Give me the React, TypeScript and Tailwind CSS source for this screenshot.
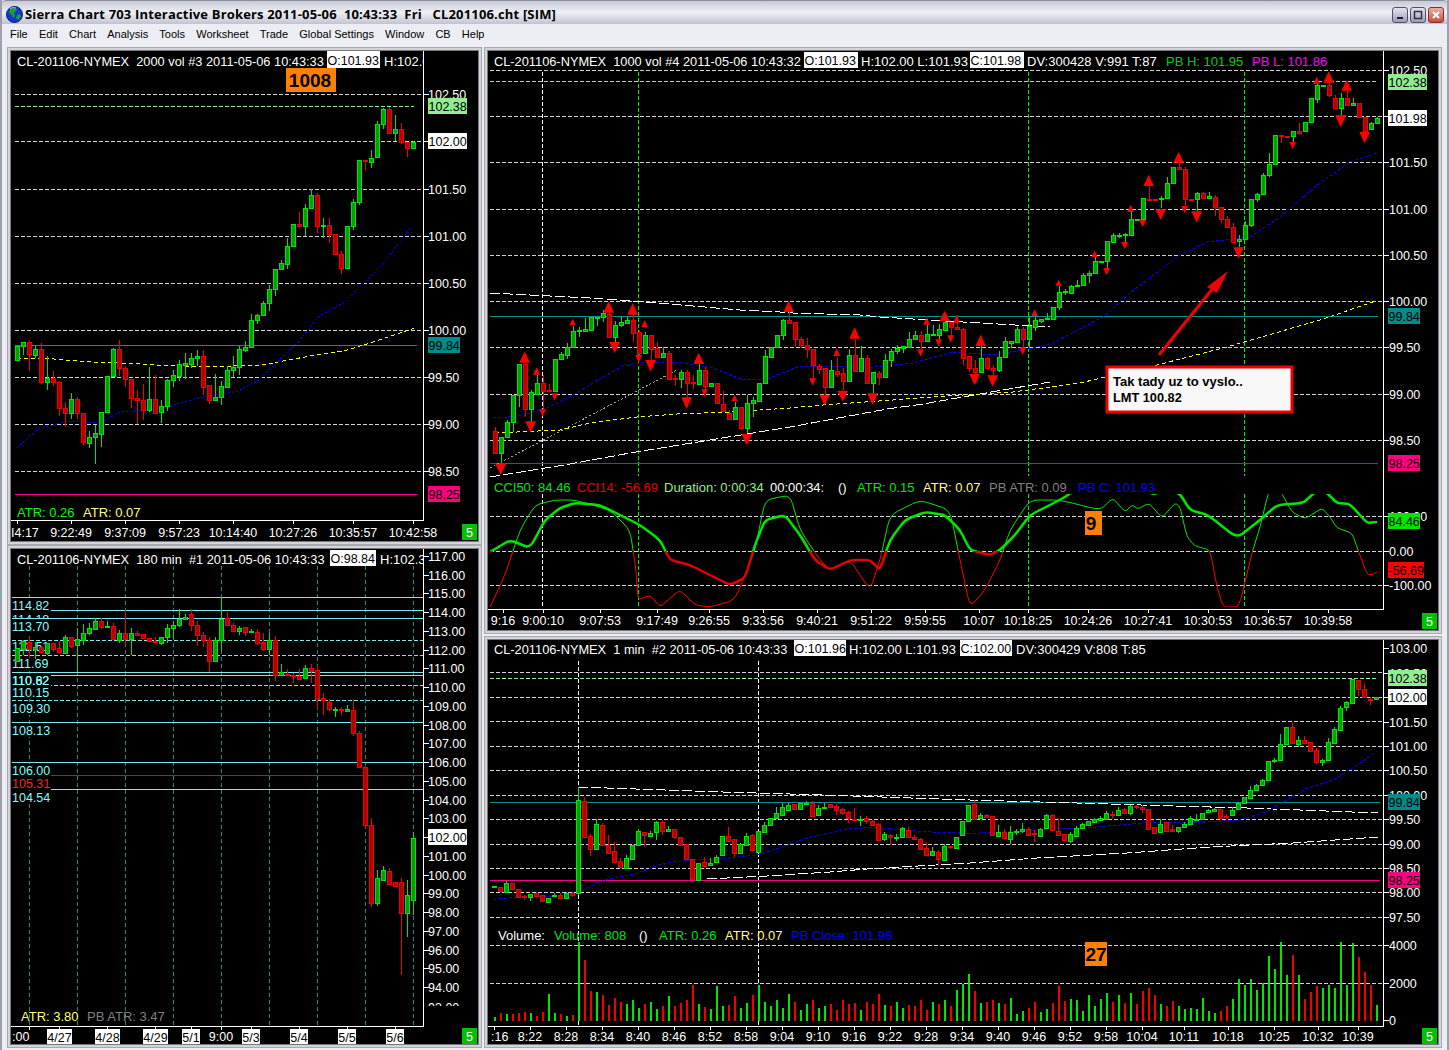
import React from "react";

type Row = number[];
type C = { x: number; g: number; t: number; b: number; h: number; l: number };

const seg = (ox: number, oy: number, start: number, rows: Row[]): C[] =>
  rows.map((r, i) => ({
    x: Math.round(ox + (start + 18 * i) / 3),
    g: r[0],
    t: Math.round(oy + r[1] / 3),
    b: Math.round(oy + r[2] / 3),
    h: Math.round(oy + (r[3] ?? r[1]) / 3),
    l: Math.round(oy + (r[4] ?? r[2]) / 3),
  }));

const pts = (ox: number, oy: number, a: number[]) => {
  const out: string[] = [];
  for (let i = 0; i < a.length; i += 2) out.push(`${ox + a[i] / 3},${oy + a[i + 1] / 3}`);
  return out.join(" ");
};

const smooth = (s: string) => {
  const p = s.split(" ").map((q) => q.split(",").map(Number));
  let d = `M${p[0][0]},${p[0][1]}`;
  for (let i = 1; i < p.length - 1; i++) {
    const ax = p[i][0] - (p[i][0] - p[i - 1][0]) * 0.25;
    const ay = p[i][1] - (p[i][1] - p[i - 1][1]) * 0.25;
    const bx = p[i][0] + (p[i + 1][0] - p[i][0]) * 0.25;
    const by = p[i][1] + (p[i + 1][1] - p[i][1]) * 0.25;
    d += ` L${ax},${ay} Q${p[i][0]},${p[i][1]} ${bx},${by}`;
  }
  const e = p[p.length - 1];
  return `${d} L${e[0]},${e[1]}`;
};

const c1 = seg(12, 95, 16, [
  [1,754,794],[1,742,754,742,780],[0,742,778,738,828],[1,763,779,752,790],[0,763,862,744,868],[1,850,862,784,885],[0,850,862,828,873],[0,862,940,858,962],[0,940,953,922,996],[1,913,953,895,972],[0,913,955,906,972],[0,955,1040,955,1050],[1,1027,1045,1008,1058],[1,1015,1027,990,1106],[1,952,1016,952,1055],[1,844,952],[1,763,844,760,846],[0,763,820,736,844],[0,820,853,812,875],[0,853,910,853,940],[0,910,914,885,986],[0,916,946,868,975],[1,913,946,816,950],[0,913,953,840,958],[1,934,952,916,984],[1,856,934,852,948],[1,840,856,825,876],[1,808,842,796,858],[1,805,809,774,852],[1,790,806,774,820],[1,784,790,766,812],[0,784,875,766,900],[0,871,916,871,927],[1,907,916,838,918],[1,874,907,858,930],[1,826,875,813,875],[1,816,826,784,846],[1,763,815,752,840],[1,757,764,738,770],[1,676,757,657,758],[1,661,676,657,688],[1,625,661,618,662],[1,583,625,570,648],[1,523,583,523,602],[1,505,523,495,524],[1,454,506,430,522],[1,388,454,388,455],[0,388,394,352,394],[1,340,394,327,423],[1,301,340,282,340],[0,301,394,295,414],[1,390,394,370,428],[0,391,418,370,444],[0,418,478],[0,478,518,468,538],[1,394,518],[1,322,394,312,404],[1,196,322,196,330],[0,196,199,196,225],[1,190,200,166,218],[1,88,187,78,187],[1,43,88,40,102],[0,43,115,36,115],[1,103,115,60,138],[0,103,142,84,146],[0,142,160,142,186],[1,140,160,138,160],
]);

const c2a = seg(0, 590, 52, [
  [1,175,212,175,214],[1,154,176,150,195],[0,155,178,140,205],[1,172,178,155,208],[0,172,185,168,186],[1,160,188,158,195],[0,160,176,160,185],[0,175,185,152,185],[1,140,188,136,188],[0,140,167,140,174],[1,148,166,115,246],[1,130,150,102,165],[1,115,130,98,135],[1,92,116,85,120],[0,92,112,85,116],[1,107,110,92,113],[0,108,148,100,150],[1,130,150,120,158],[0,130,146,60,165],[1,130,146,114,195],[0,130,136,124,138],[0,133,143,133,145],[0,143,154],[0,152,155,142,158],[1,140,158,140,164],[1,115,142,102,158],[1,106,115,92,148],[1,86,106,58,110],[1,82,88,72,88],[0,73,106,58,122],[0,106,136,94,168],[0,136,151,125,172],[0,150,212,140,245],[1,150,212,140,212],[1,86,150,22,182],[0,85,106,66,108],[0,106,124,100,124],[1,115,124,108,134],[0,112,127,112,138],[1,124,127,118,128],[0,125,158,118,165],[0,157,178,130,182],[1,151,178,130,195],[0,150,255,138,272],[1,247,255,222,255],[0,252,256,236,258],[0,256,259,248,278],[0,258,266,238,268],[1,235,265,226,265],[0,235,242,222,280],[0,241,326,226,358],[0,325,330,310,374],[0,335,358,328,362],[1,358,360,350,380],[0,358,360,352,376],[1,358,362,345,366],[0,361,430,326,438],[0,430,530,424,532],[0,530,706,526,718],
]);
const c2b: C[] = [
  {x:371,g:0,t:825,b:903,h:818,l:907},{x:377,g:1,t:878,b:903,h:870,l:906},{x:383,g:1,t:870,b:880,h:866,l:880},{x:389,g:0,t:871,b:884,h:868,l:884},{x:395,g:0,t:882,b:886,h:882,l:886},{x:401,g:0,t:882,b:913,h:878,l:975},{x:407,g:1,t:895,b:913,h:880,l:937},{x:413,g:1,t:838,b:900,h:832,l:915},
];

const c3 = [
  ...seg(490, 290, 14, [
    [0,424,490,412,490],[1,440,490,440,520],[1,397,440,390,440],[1,316,397,316,425],[1,222,316,222,350],[0,222,358,222,380],[1,307,358,300,395],[1,280,312,255,312],[0,280,302,256,365],[0,300,302,282,302],[1,208,302,208,305],[1,192,208,186,208],[1,172,194,160,207],[1,124,172,108,172],[1,120,123,112,140],[1,118,122,84,122],[1,82,119],[1,82,84,82,108],[1,70,80,60,95],[0,72,140,60,140],[1,106,140,94,160],[1,96,106,82,112],[1,90,98,82,100],[0,90,128,75,155],[0,126,188,120,195],[1,136,188,125,190],[0,136,176,135,210],[0,174,200,155,200],[1,190,200,172,202],[0,190,266,184,266],[0,264,266,255,288],[1,247,266,240,294],[0,247,278,240,325],[0,276,280,255,297],[1,240,281,220,281],[0,240,288,230,300],[1,280,288,280,290],[0,280,340],[0,343,362,304,362],[0,370,386,360,386],[1,352,386,335,386],[0,352,414,352,420],[1,340,414,315,430],[1,331,340,320,380],[1,278,332],[1,198,278,180,278],[1,172,200],[1,136,172],[1,90,136,88,150],[0,90,98,60,102],
  ]),
  ...seg(780, 280, 44, [
    [0,127,178,127,200],[0,178,196,170,205],[0,196,208,175,234],[0,208,256,208,295],[0,258,266,252,282],[0,265,322,265,345],[1,270,322,240,322],[0,274,281,230,290],[0,280,302,265,330],[1,226,302,208,302],[0,226,272,178,275],[1,235,272,198,275],[0,235,308,226,310],[1,277,308,277,340],[0,278,290,272,315],[1,241,290,222,292],[1,212,240,208,262],[1,204,212,196,222],[1,198,205,198,218],[1,178,200,155,205],[1,165,178,153,180],[0,165,182,153,208],[1,163,182,136,182],[1,163,164,136,164],[1,148,164,132,178],[1,127,149,118,150],[0,127,142,125,168],[0,142,146,105,146],[0,148,233,145,255],[0,229,263,229,276],[0,263,275,240,285],[1,235,275,198,275],[0,235,263,232,265],[0,263,269,256,290],[1,232,269,212,275],[1,184,232,172,234],[1,184,190,184,205],[1,148,185,140,185],[0,148,176,140,205],[1,138,176,108,205],[1,120,140,112,152],[1,117,122,117,130],[1,114,118,98,118],[1,80,116],[1,36,80,18,90],[1,32,36,28,46],[1,18,38,15,38],[1,15,18,0,18],
  ]),
  ...seg(1080, 90, 8, [
    [1,556,586,550,586],[1,550,555,544,580],[1,514,550,502,550],[1,512,515],[1,454,514,454,534],[1,436,455,430,455],[1,434,436,430,445],[1,432,434,430,462],[1,388,436,366,436],[1,387,389],[1,325,388,325,390],[0,326,328,288,328],[0,327,329],[1,324,327,318,355],[1,278,325,262,325],[1,232,278],[0,232,238,218,238],[0,238,328,232,350],[0,327,329],[1,310,328,306,362],[0,310,325,305,325],[1,319,325,305,325],[0,320,352,314,378],[0,352,388,352,398],[0,388,412,378,412],[0,412,456,400,460],[1,448,454,435,470],[1,406,448,394,448],[1,328,406,328,412],[1,313,328,310,336],[1,256,313,250,313],[1,223,256,190,262],[1,136,223,136,225],[0,136,139,136,160],[0,137,139],[1,124,139,124,155],[0,124,130,100,136],[1,97,124,95,124],[1,25,97],
  ]),
  ...seg(1250, 0, 200, [
    [1,256,296,252,310],[1,255,257],[0,256,286,240,292],[0,295,325,285,325],[1,295,325,280,345],[0,295,314,272,318],[1,310,314,295,314],[0,310,352,310,355],[0,352,392,350,395],[1,370,388,365,388],[1,355,370,350,370],
  ]),
];

const c4 = [
  ...seg(490, 780, 12, [
    [1,318,320],[0,321,332],[1,310,335,304,335],[0,310,326],[0,328,352],[0,347,350,345,360],[1,342,350,342,362],[0,339,347,335,349],[0,346,362],[1,354,365],[1,345,349,338,349],[0,346,355,340,358],[1,340,354,336,354],[0,339,346,336,350],[1,60,340,20,345],[0,64,172,52,172],[0,168,208,162,228],[1,133,206,118,206],[0,136,196,130,196],[0,196,218,166,218],[0,214,245,186,245],[0,244,261,235,261],[1,235,265,226,265],[1,196,236],[1,154,196,148,196],[0,157,164,155,200],[1,160,168,153,171],[1,127,157,124,180],[0,127,154,120,165],[1,148,153,138,157],[0,148,170,148,178],[0,172,194,170,194],[0,193,236],[0,238,296,236,296],[1,248,299],[0,246,257,232,257],[1,250,254,235,254],[1,230,247,226,250],[1,168,226],[0,168,182,140,182],[0,178,220,178,232],[1,193,220,190,222],[1,168,194,160,194],[0,166,210,162,210],[1,154,216],[1,136,155,126,155],[1,115,134],[1,100,113,82,113],[1,82,104,70,104],[1,76,89,70,89],[0,72,86],[1,70,86],[1,68,70,62,70],[0,68,107,64,107],[1,85,104,76,104],[1,82,85,68,85],[0,73,80],[0,79,89,72,105],[0,88,98,84,105],[0,97,113,92,128],[0,118,120,84,120],[1,116,118,108,138],[0,115,124,108,132],[0,124,134,120,136],[0,133,179,130,179],[1,162,178,156,184],[0,165,172,162,195],[1,170,172,162,182],[1,143,170,140,170],[0,150,172,142,172],[0,172,178,165,180],[0,178,206,175,206],[0,205,226,186,226],[1,214,224,202,228],[0,216,238,210,258],[1,199,241,193,241],[0,198,201,198,208],[1,172,203],[1,124,166],[1,76,124],
  ]),
  ...seg(960, 670, 43, [
    [0,402,447,390,447],[1,435,443,430,447],[0,435,441,432,445],[0,439,496],[1,486,497,465,497],[0,487,503,478,508],[1,486,506,468,522],[1,484,487,478,495],[1,478,484,460,488],[0,478,494,472,494],[0,488,491,480,515],[1,478,497,475,497],[1,436,473,432,473],[0,436,480,433,480],[0,482,494,445,494],[0,493,509],[1,492,513,485,518],[1,475,497,468,497],[1,462,474,458,474],[1,453,464],[1,447,455,444,458],[1,445,450,438,452],[1,430,446,422,446],[0,432,435,422,448],[1,421,434,412,434],[0,418,428,415,428],[1,409,428,406,434],[0,408,412,405,416],[0,412,418,405,428],[0,418,476],[0,472,488],[1,461,485,446,485],[0,457,482,455,482],[0,478,484,465,484],[1,472,482,470,490],[1,462,472,455,472],[1,445,461,438,461],[1,446,448,432,448],[1,428,447],[1,421,426,416,430],[1,418,422,414,425],[0,418,443],[0,439,441,432,447],[1,421,434,412,434],[1,399,418,395,418],[1,382,398],[1,359,385,348,385],[1,346,361,343,361],[1,331,346,326,346],[1,274,329],[1,270,274,264,280],[1,223,271,192,271],[1,172,221],[0,172,219,155,219],[1,211,221,198,230],[0,211,220,198,220],[0,217,242],[0,241,275,235,282],[1,271,277,266,288],[1,217,271,205,271],[1,178,218,172,218],[1,113,179,108,179],[1,96,110,92,122],[1,28,100],[0,30,58,30,78],[0,58,82,40,82],[0,88,90,80,105],[1,82,88],
  ]),
];

const arrows: number[][] = [
  ...[[104,184,218,16],[140,232,254,11],[248,86,106,10],[356,34,68,16],[428,40,74,16],[464,90,112,10],[626,188,222,16],[734,314,334,10],[896,32,66,16]].map((a) => [490,290,1,...a]),
  ...[[32,522,554,16],[122,394,428,16],[158,358,380,10],[194,310,332,10],[374,156,190,16],[446,195,218,10],[482,210,245,16],[590,322,356,16],[644,298,320,10],[770,432,466,16]].map((a) => [490,290,0,...a]),
  ...[[170,205,228,10],[224,142,176,16],[440,112,134,10],[494,92,124,16],[530,106,128,10],[602,164,198,16],[764,88,108,10],[836,0,17,10]].map((a) => [780,280,1,...a]),
  ...[[98,295,317,10],[134,344,376,16],[188,332,365,16],[278,340,374,16],[422,208,230,10],[476,178,200,10],[512,166,188,10],[584,282,316,16],[638,286,320,16],[728,202,225,10]].map((a) => [780,280,0,...a]),
  ...[[44,482,502,10],[152,344,366,10],[206,254,288,16],[296,186,218,16]].map((a) => [1080,90,1,...a]),
  ...[[80,534,556,10],[134,456,478,10],[188,390,412,10],[242,358,390,16],[314,348,370,10],[350,364,398,16],[638,156,178,10],[476,472,506,16],[782,76,110,16],[854,126,160,16]].map((a) => [1080,90,0,...a]),
  ...[[200,230,252,10],[236,214,248,16],[290,240,272,16]].map((a) => [1250,0,1,...a]),
  ...[[272,346,380,16]].map((a) => [1250,0,0,...a]),
];

const volLeft = [1017,1013,1014,1014,1013,1012,1013,1016,1012,994,1013,1014,1016,1015,942,960,991,992,995,1005,998,1002,1004,1000,1008,1004,1002,1009,1006,996,1006,1003,1000,985,1004,1007,1009,986,1006,1005,996,1008,1003,995,985,1002,1006,1000,1008,994,1002,1010,1004,1000,1008,1006,1004,1010,1000,1004,1003,1010,1002,1004,994,1005,1006,1002,1008,1005,1006,1000,1010,1002,1004,1000,1006,990];
const volRight: [number, number][] = [[1,942],[1,912],[0,963],[1,998],[0,996],[0,990],[1,998],[0,1001],[1,984],[1,1032],[1,1023],[0,1014],[0,996],[1,1026],[1,1017],[0,999],[0,948],[0,993],[1,987],[1,990],[1,1023],[1,975],[1,1008],[1,987],[1,969],[0,996],[1,975],[0,999],[1,969],[0,1002],[0,963],[0,954],[0,975],[1,1002],[0,1008],[0,993],[1,1008],[1,1017],[1,1014],[1,1017],[1,984],[1,1023],[1,1029],[0,1023],[0,1008],[1,987],[1,927],[1,945],[1,927],[1,960],[1,939],[1,858],[1,897],[1,816],[1,915],[0,855],[1,915],[0,987],[0,966],[0,948],[1,954],[1,945],[1,954],[1,816],[1,945],[1,819],[0,861],[0,906],[0,945],[1,1005]];

const Candles = ({ data }: { data: C[] }) => (
  <g shapeRendering="crispEdges">
    {data.map((c, i) => {
      const col = c.g ? "#00e600" : "#f20000";
      return (
        <g key={i}>
          <line x1={c.x + 0.5} x2={c.x + 0.5} y1={c.h} y2={c.l} stroke={col} />
          <rect x={c.x - 1.5} y={c.t + 0.5} width={4} height={Math.max(c.b - c.t, 1)} fill={c.g ? "#00a000" : "#b00000"} stroke={col} />
        </g>
      );
    })}
  </g>
);

const T = ({ x, y, c = "#fff", a, s = 12.5, w, children }: { x: number; y: number; c?: string; a?: "middle" | "end"; s?: number; w?: number; children: React.ReactNode }) => (
  <text x={x} y={y + 1} fill={c} textAnchor={a} fontSize={s} fontWeight={w} dominantBaseline="central" className="whitespace-pre">
    {children}
  </text>
);
const S = 13;
const TS = 12.8;

const Box = ({ x, y, w, h = 16, bg, c = "#000", children, a }: { x: number; y: number; w: number; h?: number; bg: string; c?: string; children: React.ReactNode; a?: boolean }) => (
  <g>
    <rect x={x} y={y} width={w} height={h} fill={bg} />
    <text x={a ? x + w / 2 : x + 0.5} y={y + h / 2 + 1} fill={c} fontSize={12.5} textAnchor={a ? "middle" : undefined} dominantBaseline="central">
      {children}
    </text>
  </g>
);

const Grid = ({ ys, x1, x2, color = "#d4d4d4" }: { ys: number[]; x1: number; x2: number; color?: string }) => (
  <g shapeRendering="crispEdges">
    {ys.map((y) => (
      <line key={y} x1={x1} x2={x2} y1={y + 0.5} y2={y + 0.5} stroke={color} strokeDasharray="4 2" />
    ))}
  </g>
);

const VLines = ({ xs, y1, y2, color, dash = "4 2" }: { xs: number[]; y1: number; y2: number; color: string; dash?: string }) => (
  <g shapeRendering="crispEdges">
    {xs.map((x) => (
      <line key={x} x1={x + 0.5} x2={x + 0.5} y1={y1} y2={y2} stroke={color} strokeDasharray={dash} />
    ))}
  </g>
);

const Ticks = ({ ys, x }: { ys: number[]; x: number }) => (
  <g shapeRendering="crispEdges">
    {ys.map((y) => (
      <line key={y} x1={x} x2={x + 5} y1={y + 0.5} y2={y + 0.5} stroke="#fff" />
    ))}
  </g>
);

const BotTicks = ({ xs, y }: { xs: number[]; y: number }) => (
  <g shapeRendering="crispEdges">
    {xs.map((x) => (
      <line key={x} x1={x + 0.5} x2={x + 0.5} y1={y} y2={y + 4} stroke="#fff" />
    ))}
  </g>
);

const Axes = ({ x, y1, y2, left }: { x: number; y1: number; y2: number; left: number }) => (
  <g shapeRendering="crispEdges">
    <line x1={x + 0.5} x2={x + 0.5} y1={y1} y2={y2} stroke="#fff" />
    <line x1={left} x2={x + 1} y1={y2 + 0.5} y2={y2 + 0.5} stroke="#fff" />
  </g>
);

const Five = ({ x, y }: { x: number; y: number }) => <Box x={x} y={y} w={15} h={16} bg="#00c000" c="#fff" a>5</Box>;

const Poly = ({ p, c, d }: { p: string; c: string; d?: string }) => (
  <polyline points={p} fill="none" stroke={c} strokeWidth={1} strokeDasharray={d} shapeRendering="crispEdges" />
);

const Pane = ({ x, y, w, h, children }: { x: number; y: number; w: number; h: number; children: React.ReactNode }) => (
  <div className="bg-black shadow-[0_0_0_1px_#777780,0_0_0_3px_#d4d4d8,0_0_0_4px_#a8a8b0]" style={{ width: w, height: h }}>
    <svg width={w} height={h} viewBox={`${x} ${y} ${w} ${h}`} className="block font-['Liberation_Sans',Arial,sans-serif]">
      {children}
    </svg>
  </div>
);

const TopLeft = () => (
  <Pane x={11} y={51} w={467} h={490}>
    <defs>
      <clipPath id="tl"><rect x={11} y={51} width={412} height={469} /></clipPath>
    </defs>
    <Grid ys={[94, 141, 189, 236, 283, 330, 377, 424, 471]} x1={15} x2={423} />
    <Grid ys={[106]} x1={15} x2={414} color="#90ee90" />
    <line x1={15} x2={417} y1={345.5} y2={345.5} stroke="#0a8f8f" shapeRendering="crispEdges" />
    <line x1={15} x2={417} y1={494.5} y2={494.5} stroke="#ff0080" shapeRendering="crispEdges" />
    <Poly p={pts(12, 95, [15,790,100,790,250,802,380,806,450,812,600,815,750,810,900,782,1000,767,1080,742,1205,700])} c="#ffff00" d="4 3" />
    <Poly p={pts(12, 95, [16,1058,80,1000,160,980,270,982,320,952,460,938,560,908,680,888,740,855,860,740,920,665,1000,620,1050,570,1110,510,1195,400])} c="#0000ff" d="2 2" />
    <Candles data={c1} />
    <g clipPath="url(#tl)">
      <T x={17} y={60} s={TS}>CL-201106-NYMEX  2000 vol #3 2011-05-06 10:43:33</T>
      <Box x={327} y={51} w={53} h={17} bg="#fff">O:101.93</Box>
      <T x={384} y={60} s={S}>H:102.00</T>
    </g>
    <rect x={286} y={68} width={50} height={24} fill="#ff8000" />
    <T x={310} y={79} c="#000" s={19} w={700} a="middle">1008</T>
    <Axes x={423} y1={51} y2={520} left={11} />
    <Ticks ys={[94, 141, 189, 236, 283, 330, 377, 424, 471]} x={424} />
    {[["102.50", 94], ["101.50", 189], ["101.00", 236], ["100.50", 283], ["100.00", 330], ["99.50", 377], ["99.00", 424], ["98.50", 471]].map(([t, y]) => (
      <T key={t} x={428} y={y as number}>{t}</T>
    ))}
    <Box x={428} y={98} w={39} bg="#90ee90">102.38</Box>
    <Box x={428} y={133} w={39} bg="#fff">102.00</Box>
    <Box x={428} y={337} w={32} bg="#008b8b">99.84</Box>
    <Box x={428} y={486} w={32} bg="#ff0080">98.25</Box>
    <T x={17} y={511} s={S} c="#00ff00">ATR: 0.26</T>
    <T x={83} y={511} s={S} c="#ffff80">ATR: 0.07</T>
    <BotTicks xs={[17, 71, 125, 179, 233, 293, 353, 413]} y={520} />
    <T x={11} y={532}>I4:17</T>
    {[["9:22:49", 71], ["9:37:09", 125], ["9:57:23", 179], ["10:14:40", 233], ["10:27:26", 293], ["10:35:57", 353], ["10:42:58", 413]].map(([t, x]) => (
      <T key={t} x={x as number} y={532} a="middle">{t}</T>
    ))}
    <Five x={462} y={524} />
  </Pane>
);

const cyanSolid = [597, 610, 618, 672, 675, 722, 762, 789];
const cyanDash = [640, 655, 685, 700];
const lvl: [string, number, number, string?][] = [
  ["114.82", 605, 7], ["114.18", 619, 6], ["113.70", 626, 7], ["112.51", 646, 0], ["111.69", 663, 6], ["110.62", 680, 6], ["110.82", 680, 0], ["110.15", 692, 6], ["109.30", 708, 6], ["108.13", 730, 6], ["106.00", 770, 6], ["105.31", 783, 6, "#ff2020"], ["104.54", 797, 6],
];

const BottomLeft = () => (
  <Pane x={11} y={549} w={467} h={495}>
    <defs>
      <clipPath id="bl"><rect x={11} y={549} width={412} height={477} /></clipPath>
      <clipPath id="ba"><rect x={424} y={549} width={54} height={457} /></clipPath>
    </defs>
    <VLines xs={[29, 77, 125, 173, 221, 269, 317, 365, 413]} y1={566} y2={1026} color="#0a8f8f" dash="4 3" />
    <g shapeRendering="crispEdges">
      {cyanSolid.map((y) => (<line key={y} x1={y === 610 ? 51 : 12} x2={423} y1={y + 0.5} y2={y + 0.5} stroke="#7fe8e8" />))}
      {cyanDash.map((y) => (<line key={y} x1={12} x2={423} y1={y + 0.5} y2={y + 0.5} stroke="#7fe8e8" strokeDasharray="4 2" />))}
      <line x1={51} x2={423} y1={775.5} y2={775.5} stroke="#d01010" />
    </g>
    {lvl.map(([t, y, up, c]) => (
      <g key={t}>
        {up > 0 && <rect x={12} y={y - up} width={39} height={up + 7} fill="#000" />}
        <T x={12} y={y} c={c ?? "#80ffff"}>{t}</T>
      </g>
    ))}
    <line x1={12} x2={423} y1={618.5} y2={618.5} stroke="#7fe8e8" shapeRendering="crispEdges" />
    <Candles data={[...c2a, ...c2b]} />
    <g clipPath="url(#bl)">
      <T x={17} y={558} s={TS}>CL-201106-NYMEX  180 min  #1 2011-05-06 10:43:33</T>
      <Box x={330} y={550} w={46} h={16} bg="#fff">O:98.84</Box>
      <T x={380} y={558} s={S}>H:102.38</T>
    </g>
    <Axes x={423} y1={549} y2={1026} left={11} />
    <Ticks ys={[556, 575, 593, 612, 631, 650, 668, 687, 706, 725, 743, 762, 781, 800, 818, 837, 856, 875, 893, 912, 931, 950, 968, 987]} x={424} />
    <g clipPath="url(#ba)">
      {[["117.00",556],["116.00",575],["115.00",593],["114.00",612],["113.00",631],["112.00",650],["111.00",668],["110.00",687],["109.00",706],["108.00",725],["107.00",743],["106.00",762],["105.00",781],["104.00",800],["103.00",818],["101.00",856],["100.00",875],["99.00",893],["98.00",912],["97.00",931],["96.00",950],["95.00",968],["94.00",987],["93.00",1007]].map(([t, y]) => (
        <T key={t} x={428} y={y as number}>{t}</T>
      ))}
    </g>
    <Box x={428} y={829} w={39} bg="#fff">102.00</Box>
    <T x={21} y={1015} s={S} c="#ffff80">ATR: 3.80</T>
    <T x={87} y={1015} s={S} c="#808080">PB ATR: 3.47</T>
    <BotTicks xs={[29, 59, 107, 155, 191, 221, 251, 299, 347, 395]} y={1026} />
    <T x={12} y={1036}>:00</T>
    {[["4/27",47,25],["4/28",95,25],["4/29",143,25],["5/1",182,18],["5/3",242,18],["5/4",290,18],["5/5",338,18],["5/6",386,18]].map(([t, x, w]) => (
      <Box key={t} x={x as number} y={1029} w={w as number} h={15} bg="#fff" a>{t}</Box>
    ))}
    <T x={221} y={1036} a="middle">9:00</T>
    <Five x={462} y={1028} />
  </Pane>
);

const cci = "490,552 510,540 530,548 545,520 560,508 575,503 600,505 620,515 640,525 660,540 670,560 690,565 710,575 730,585 745,578 755,545 765,520 785,515 800,535 815,560 830,570 850,560 870,560 880,570 890,540 905,520 925,512 945,515 960,530 970,550 990,555 1000,550 1015,535 1030,515 1050,505 1065,497 1075,490 1140,490 1150,493 1155,494 1165,488 1180,494 1190,510 1208,515 1237,538 1260,520 1277,505 1303,503 1313,494 1320,488 1328,494 1337,503 1350,504 1367,523 1377,522";
const thin = "490,607 505,575 520,530 535,505 555,500 575,500 610,510 630,530 636,570 638,600 650,595 660,607 668,600 680,590 695,605 710,607 735,600 755,550 765,500 790,495 800,530 820,560 830,570 850,560 870,590 880,560 890,515 920,500 950,510 960,560 970,607 985,590 1000,560 1010,530 1030,500 1060,500 1100,510 1113,498 1125,512 1132,505 1138,509 1149,503 1162,518 1175,503 1180,507 1187,537 1195,546 1210,550 1217,587 1222,603 1225,607 1239,607 1252,553 1260,527 1268,494 1275,480 1282,494 1292,512 1305,519 1322,508 1330,517 1337,528 1352,533 1358,550 1367,574 1372,575 1377,572";

const TopRight = () => (
  <Pane x={488} y={51} w={950} h={579}>
    <defs>
      <clipPath id="up"><rect x={488} y={494} width={895} height={57} /></clipPath>
      <clipPath id="dn"><rect x={488} y={551} width={895} height={56} /></clipPath>
    </defs>
    <Grid ys={[70, 116, 162, 209, 255, 301, 347, 394, 440]} x1={490} x2={1382} />
    <Grid ys={[81]} x1={490} x2={1378} color="#90ee90" />
    <Grid ys={[516, 551, 585]} x1={490} x2={1382} />
    <VLines xs={[542]} y1={72} y2={476} color="#ffffff" />
    <VLines xs={[542]} y1={494} y2={607} color="#ffffff" />
    <VLines xs={[638, 1028, 1244]} y1={72} y2={476} color="#00f000" />
    <VLines xs={[638, 1028, 1244]} y1={494} y2={607} color="#00f000" />
    <g shapeRendering="crispEdges">
      <line x1={490} x2={1378} y1={316.5} y2={316.5} stroke="#0a8f8f" />
      <line x1={490} x2={1378} y1={463.5} y2={463.5} stroke="#c8106a" />
    </g>
    <Poly p="490,468 677,370" c="#a0a0a0" d="2 2" />
    <Poly p="490,293 590,298 657,303 740,310 780,312 793,313 860,315 880,317 913,319 963,322 1050,327" c="#ffffff" d="10 3" />
    <Poly p="490,477 570,464 630,453 710,440 790,427 887,409 923,404 997,391 1050,382" c="#ffffff" d="10 3" />
    <Poly p="495,433 560,430 590,423 637,417 677,414 730,412 790,408 823,405 893,400 947,396 1013,392 1080,383 1157,365 1227,347 1320,320 1373,302" c="#ffff00" d="4 3" />
    <Poly p="493,417 500,418 523,415 547,408 577,393 603,377 623,366 647,362 677,362 713,368 743,380 767,379 790,370 800,366 847,367 873,367 913,363 953,352 993,355 1033,348 1053,343 1080,329 1103,317 1130,293 1177,257 1207,242 1250,237 1280,217 1320,183 1350,162 1377,153" c="#0000ff" d="3 2" />
    <Candles data={c3} />
    {arrows.map((a, i) => {
      const [ox, oy, up, zx, y1, y2, hw] = a;
      const x = ox + zx / 3;
      const t = oy + y1 / 3;
      const b = oy + y2 / 3;
      const h = hw / 3;
      return <polygon key={i} fill="#ff0000" points={up ? `${x},${t} ${x - h},${b} ${x + h},${b}` : `${x - h},${t} ${x + h},${t} ${x},${b}`} />;
    })}
    <g clipPath="url(#up)" fill="none">
      <path d={smooth(thin)} stroke="#00e600" />
      <path d={smooth(cci)} stroke="#00e600" strokeWidth={2.5} />
    </g>
    <g clipPath="url(#dn)" fill="none">
      <path d={smooth(thin)} stroke="#ff0000" />
      <path d={smooth(cci)} stroke="#e60000" strokeWidth={2.5} />
    </g>
    <T x={494} y={60} s={TS}>CL-201106-NYMEX  1000 vol #4 2011-05-06 10:43:32</T>
    <Box x={804} y={52} w={54} bg="#fff">O:101.93</Box>
    <T x={861} y={60} s={S}>H:102.00 L:101.93</T>
    <Box x={970} y={52} w={54} bg="#fff">C:101.98</Box>
    <T x={1027} y={60} s={S}>DV:300428 V:991 T:87</T>
    <T x={1166} y={60} s={S} c="#00d000">PB H: 101.95</T>
    <T x={1252} y={60} s={S} c="#ff00ff">PB L: 101.86</T>
    <T x={494} y={486} s={S} c="#00e600">CCI50: 84.46</T>
    <T x={577} y={486} s={S} c="#e60000">CCI14: -56.69</T>
    <T x={664} y={486} s={S} c="#90ee90">Duration: 0:00:34</T>
    <T x={770} y={486} s={S}>00:00:34:</T>
    <T x={838} y={486} s={S}>()</T>
    <T x={857} y={486} s={S} c="#00e600">ATR: 0.15</T>
    <T x={923} y={486} s={S} c="#ffff80">ATR: 0.07</T>
    <T x={989} y={486} s={S} c="#808080">PB ATR: 0.09</T>
    <T x={1078} y={486} s={S} c="#0000ff">PB C: 101.93</T>
    <rect x={1085} y={511} width={17} height={24} fill="#ff8000" />
    <T x={1091} y={522} c="#000" s={19} w={700} a="middle">9</T>
    <line x1={1159} y1={355} x2={1218} y2={282} stroke="#f00000" strokeWidth={3} />
    <polygon points="1228,271 1207,287 1217,293" fill="#f00000" />
    <rect x={1107} y={367} width={185} height={45} fill="#f8f8f8" stroke="#f00000" strokeWidth={3} />
    <T x={1113} y={380} c="#000" s={13} w={700}>Tak tady uz to vyslo..</T>
    <T x={1113} y={396} c="#000" s={12.75} w={700}>LMT 100.82</T>
    <Axes x={1383} y1={51} y2={609} left={488} />
    <Ticks ys={[70, 116, 162, 209, 255, 301, 347, 394, 440, 516, 551, 585]} x={1384} />
    {[["102.50",70],["101.50",162],["101.00",209],["100.50",255],["100.00",301],["99.50",347],["99.00",394],["98.50",440],["100.00",516],["0.00",551],["-100.00",585]].map(([t, y], i) => (
      <T key={i} x={1389} y={y as number}>{t}</T>
    ))}
    <Box x={1388} y={74} w={39} bg="#90ee90">102.38</Box>
    <Box x={1388} y={110} w={39} bg="#fff">101.98</Box>
    <Box x={1388} y={308} w={32} bg="#008b8b">99.84</Box>
    <Box x={1388} y={455} w={32} bg="#ff0080">98.25</Box>
    <Box x={1388} y={513} w={32} bg="#00e600">84.46</Box>
    <Box x={1388} y={562} w={36} bg="#ff0000">-56.69</Box>
    <BotTicks xs={[503, 543, 600, 657, 709, 763, 817, 871, 925, 979, 1028, 1088, 1148, 1208, 1268, 1328]} y={609} />
    {[["9:16",503],["9:00:10",543],["9:07:53",600],["9:17:49",657],["9:26:55",709],["9:33:56",763],["9:40:21",817],["9:51:22",871],["9:59:55",925],["10:07",979],["10:18:25",1028],["10:24:26",1088],["10:27:41",1148],["10:30:53",1208],["10:36:57",1268],["10:39:58",1328]].map(([t, x]) => (
      <T key={t} x={x as number} y={620} a="middle">{t}</T>
    ))}
    <Five x={1422} y={613} />
  </Pane>
);

const BottomRight = () => {
  const vols: [number, number, number][] = [
    ...volLeft.map((t, i) => [494 + i * 6, c4[i]?.g ?? 1, t] as [number, number, number]),
    ...volRight.map((v, i) => [962 + i * 6, v[0], Math.round(670 + v[1] / 3)] as [number, number, number]),
  ];
  return (
    <Pane x={488} y={640} w={950} h={404}>
      <Grid ys={[672, 697, 721, 746, 770, 795, 819, 844, 868, 892, 917, 945, 983]} x1={490} x2={1382} />
      <Grid ys={[678]} x1={490} x2={1378} color="#90ee90" />
      <VLines xs={[578, 758]} y1={661} y2={1026} color="#ffffff" />
      <g shapeRendering="crispEdges">
        <line x1={490} x2={1380} y1={802.5} y2={802.5} stroke="#0a8f8f" />
        <line x1={490} x2={1380} y1={880.5} y2={880.5} stroke="#ff0080" />
        {vols.map(([x, g, t], i) => (
          <rect key={i} x={x} y={t} width={2} height={1021 - t} fill={g ? "#00e600" : "#f00000"} />
        ))}
      </g>
      <Poly p="578,787 723,792 823,795 970,800 1040,802 1077,803 1173,806 1247,808 1378,813" c="#ffffff" d="10 3" />
      <Poly p="707,879 767,876 830,872 867,869 970,863 1037,858 1127,853 1210,847 1293,843 1378,837" c="#ffffff" d="10 3" />
      <Poly p={`${pts(490, 780, [12,358,100,350,200,350,265,340,320,308,360,296,440,280,520,250,600,240,700,236,800,225,880,200,960,172,1080,146,1160,142,1300,155,1440,160])} ${pts(960, 670, [0,492,200,482,400,472,560,458,700,458,840,450,920,425,980,390,1040,355,1120,330,1170,300,1250,245])}`} c="#0000ff" d="3 2" />
      <Candles data={c4} />
      <T x={494} y={648} s={TS}>CL-201106-NYMEX  1 min  #2 2011-05-06 10:43:33</T>
      <Box x={794} y={640} w={52} bg="#fff">O:101.96</Box>
      <T x={849} y={648} s={S}>H:102.00 L:101.93</T>
      <Box x={960} y={640} w={52} bg="#fff">C:102.00</Box>
      <T x={1016} y={648} s={S}>DV:300429 V:808 T:85</T>
      <T x={498} y={934} s={S}>Volume:</T>
      <T x={554} y={934} s={S} c="#00e600">Volume: 808</T>
      <T x={639} y={934} s={S}>()</T>
      <T x={659} y={934} s={S} c="#00e600">ATR: 0.26</T>
      <T x={725} y={934} s={S} c="#ffff80">ATR: 0.07</T>
      <T x={791} y={934} s={S} c="#0000ff">PB Close: 101.96</T>
      <rect x={1085} y={942} width={22} height={24} fill="#ff8000" />
      <T x={1096} y={953} c="#000" s={19} w={700} a="middle">27</T>
      <Axes x={1383} y1={640} y2={1026} left={488} />
      <Ticks ys={[648, 673, 697, 722, 746, 770, 795, 819, 844, 868, 892, 917, 945, 983, 1020]} x={1384} />
      {[["103.00",648],["102.50",673],["101.50",722],["101.00",746],["100.50",770],["100.00",795],["99.50",819],["99.00",844],["98.50",868],["98.00",892],["97.50",917],["4000",945],["2000",983],["0",1020]].map(([t, y]) => (
        <T key={t} x={1389} y={y as number}>{t}</T>
      ))}
      <Box x={1388} y={670} w={39} bg="#90ee90">102.38</Box>
      <Box x={1388} y={689} w={39} bg="#fff">102.00</Box>
      <Box x={1388} y={794} w={32} bg="#008b8b">99.84</Box>
      <Box x={1388} y={872} w={32} bg="#ff0080">98.25</Box>
      <BotTicks xs={[494, 530, 566, 602, 638, 674, 710, 746, 782, 818, 854, 890, 926, 962, 998, 1034, 1070, 1106, 1142, 1184, 1228, 1274, 1318, 1358]} y={1026} />
      <T x={491} y={1036}>:16</T>
      {[["8:22",530],["8:28",566],["8:34",602],["8:40",638],["8:46",674],["8:52",710],["8:58",746],["9:04",782],["9:10",818],["9:16",854],["9:22",890],["9:28",926],["9:34",962],["9:40",998],["9:46",1034],["9:52",1070],["9:58",1106],["10:04",1142],["10:11",1184],["10:18",1228],["10:25",1274],["10:32",1318],["10:39",1358]].map(([t, x]) => (
        <T key={t} x={x as number} y={1036} a="middle">{t}</T>
      ))}
      <Five x={1422} y={1028} />
    </Pane>
  );
};

const Globe = () => (
  <svg width="17" height="17" viewBox="0 0 17 17" className="shrink-0">
    <circle cx="8.5" cy="8.5" r="8" fill="#1438c8" stroke="#0a1a70" />
    <path d="M4 3 L9 2 L11 4 L8 7 L9 10 L7 12 L6 9 L3 7 Z" fill="#18a030" />
    <path d="M11 9 L14 8 L15 11 L12 14 L10 12 Z" fill="#18a030" />
    <path d="M4 2.5 Q7 1 10 2" stroke="#a0c8ff" fill="none" />
  </svg>
);

const WinBtn = ({ close, children }: { close?: boolean; children: React.ReactNode }) => (
  <div className={`w-[16px] h-[16px] rounded-[3px] border flex items-center justify-center ${close ? "border-[#803030] bg-linear-to-b from-[#ecb0a4] to-[#c84838]" : "border-[#50506c] bg-linear-to-b from-[#e4e4ee] to-[#9c9cb8]"}`}>
    <svg width="10" height="10" viewBox="0 0 10 10">{children}</svg>
  </div>
);

export default function App() {
  return (
    <div className="w-[1449px] h-[1050px] overflow-hidden bg-[#eceef3] text-black flex flex-col border-x-[2px] border-x-[#a0a0ac]">
      <div className="h-[24px] -mx-[2px] flex items-center pt-[4px] pl-[6px] pr-[5px] gap-[2px] rounded-t-[6px] border-t border-[#8c8c98] bg-linear-to-b from-[#c8c9d8] via-[#eef0f5] to-[#c2c3d2]">
        <Globe />
        <span className="font-['Open_Sans',sans-serif] font-bold text-[13px] whitespace-pre tracking-[0.17px] text-black">Sierra Chart 703 Interactive Brokers 2011-05-06  10:43:33  Fri   CL201106.cht [SIM]</span>
        <div className="ml-auto flex gap-[2px]">
          <WinBtn><rect x="2" y="7" width="6" height="2" fill="#202030" /></WinBtn>
          <WinBtn><rect x="1.5" y="1.5" width="7" height="7" fill="none" stroke="#303040" strokeWidth="1.5" /></WinBtn>
          <WinBtn close><path d="M2 2 L8 8 M8 2 L2 8" stroke="#fff" strokeWidth="2" /></WinBtn>
        </div>
      </div>
      <div className="h-[20px] flex items-center pl-[8px] gap-[11.2px] text-[11px] font-['Liberation_Sans',Arial,sans-serif]">
        {["File", "Edit", "Chart", "Analysis", "Tools", "Worksheet", "Trade", "Global Settings", "Window", "CB", "Help"].map((m) => (
          <span key={m}>{m}</span>
        ))}
      </div>
      <div className="flex gap-[10px] pl-[9px] pt-[7px]">
        <div className="flex flex-col gap-[8px]">
          <TopLeft />
          <BottomLeft />
        </div>
        <div className="flex flex-col gap-[10px]">
          <TopRight />
          <BottomRight />
        </div>
      </div>
    </div>
  );
}
